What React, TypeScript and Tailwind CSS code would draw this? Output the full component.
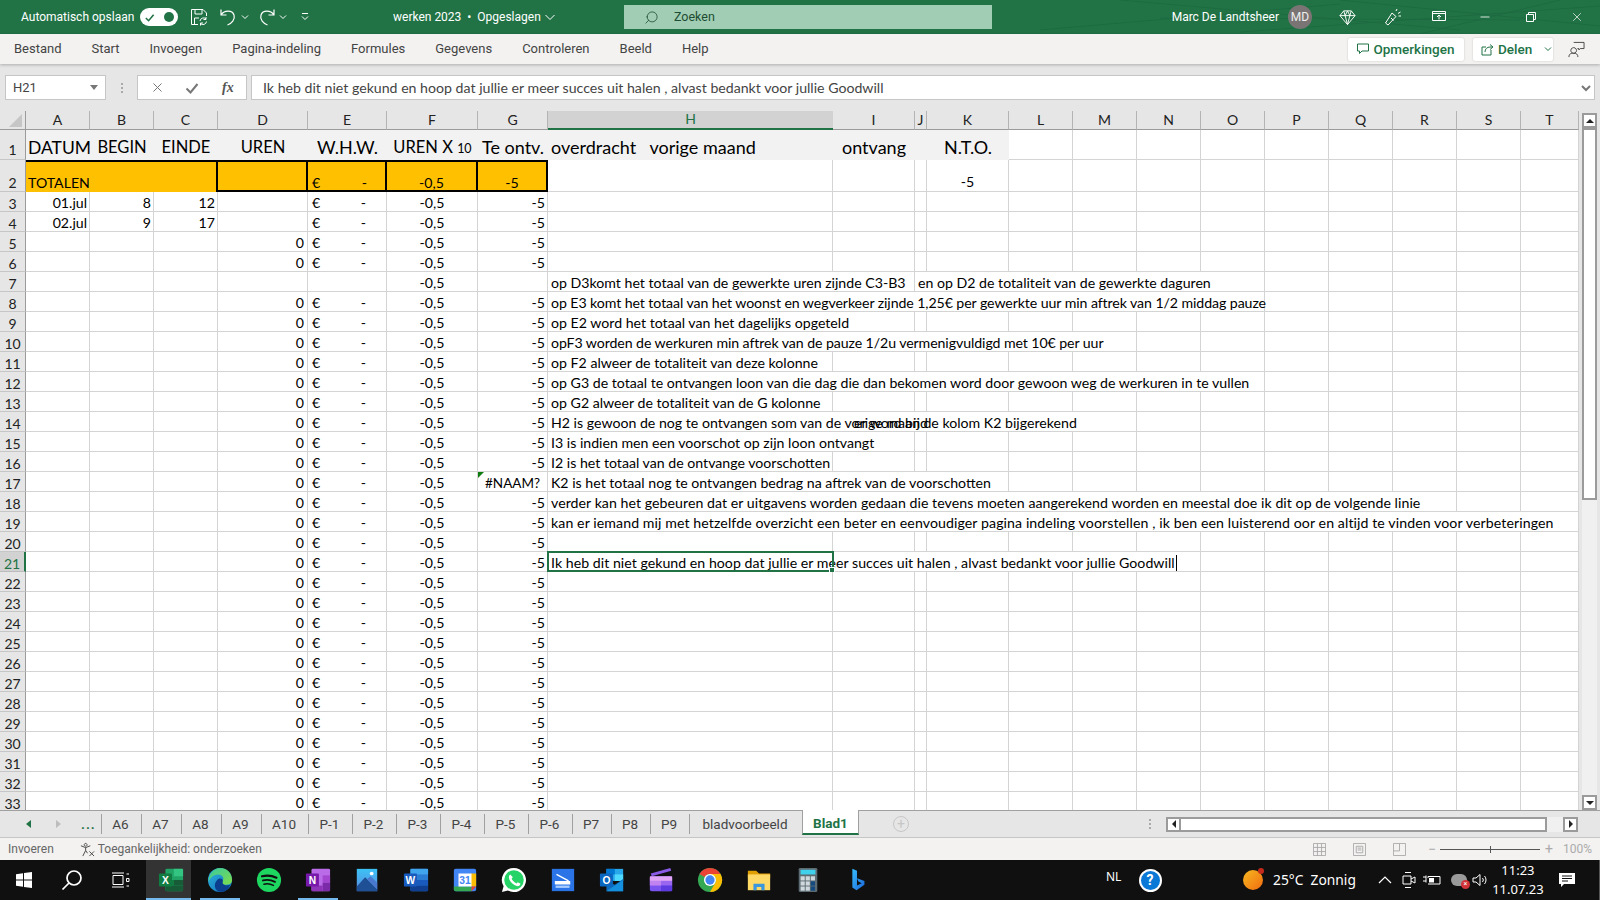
import { Minus, Search, X } from "lucide-react";

const GRID =
  "grid grid-cols-[26px_64px_64px_64px_90px_79px_91px_70px_285px_82px_12px_82px_64px_64px_64px_64px_64px_64px_64px_64px_58px]";
const LINE = "border-r border-b border-[#d4d4d4]";

const columns = ["A", "B", "C", "D", "E", "F", "G", "H", "I", "J", "K", "L", "M", "N", "O", "P", "Q", "R", "S", "T"];

const spanClass: Record<number, string> = {
  1: "col-span-1",
  2: "col-span-2",
  4: "col-span-4",
  6: "col-span-6",
  7: "col-span-7",
  8: "col-span-8",
  11: "col-span-11",
  13: "col-span-13",
};

const notes: Record<number, { text: string; span: number; track?: string }[]> = {
  7: [
    { text: "op D3komt het totaal van de gewerkte uren zijnde C3-B3", span: 2 },
    { text: "en op D2 de totaliteit van de gewerkte daguren", span: 6 },
  ],
  8: [{ text: "op E3 komt het totaal van het woonst en wegverkeer zijnde 1,25€ per gewerkte uur min aftrek van 1/2 middag pauze", span: 8, track: "tracking-[-0.08px]" }],
  9: [{ text: "op E2 word het totaal van het dagelijks opgeteld", span: 2 }],
  10: [{ text: "opF3 worden de werkuren min aftrek van de pauze 1/2u vermenigvuldigd met 10€ per uur", span: 6, track: "tracking-[-0.08px]" }],
  11: [{ text: "op F2 alweer de totaliteit van deze kolonne", span: 1 }],
  12: [{ text: "op G3 de totaal te ontvangen loon van die dag die dan bekomen word door gewoon weg de werkuren in te vullen", span: 8 }],
  13: [{ text: "op G2 alweer de totaliteit van de G kolonne", span: 1 }],
  14: [{ text: "H2 is gewoon de nog te ontvangen som van de vorige maand", span: 6 }],
  15: [{ text: "I3 is indien men een voorschot op zijn loon ontvangt", span: 2 }],
  16: [{ text: "I2 is het totaal van de ontvange voorschotten", span: 1 }],
  17: [{ text: "K2 is het totaal nog te ontvangen bedrag na aftrek van de voorschotten", span: 4 }],
  18: [{ text: "verder kan het gebeuren dat er uitgavens worden gedaan die tevens moeten aangerekend worden en meestal doe ik dit op de volgende linie", span: 11, track: "tracking-[0.05px]" }],
  19: [{ text: "kan er iemand mij met hetzelfde overzicht een beter en eenvoudiger pagina indeling voorstellen , ik ben een luisterend oor en altijd te vinden voor verbeteringen", span: 13, track: "tracking-[0.09px]" }],
  21: [{ text: "Ik heb dit niet gekund en hoop dat jullie er meer succes uit halen , alvast bedankt voor jullie Goodwill", span: 7, track: "tracking-[0.03px]" }],
};

const early: Record<number, string[]> = {
  3: ["01.jul", "8", "12"],
  4: ["02.jul", "9", "17"],
};

const rowNumbers = Array.from({ length: 31 }, (_, i) => i + 3);

function RowHead({ n, tall }: { n: number; tall?: string }) {
  const selected = n === 21;
  return (
    <div
      className={`flex items-end justify-center text-[14px] leading-[15px] ${tall ?? "h-5"} ${
        selected
          ? "bg-[#d2d2d2] text-[#217346] border-r-2 border-r-[#217346] border-b border-b-[#bcbcbc]"
          : "bg-[#e6e6e6] text-[#222] border-r border-r-[#9b9b9b] border-b border-b-[#c6c6c6]"
      }`}
    >
      {n}
    </div>
  );
}

function Cell({ className = "", children }: { className?: string; children?: React.ReactNode }) {
  return <div className={`h-5 pt-[2px] leading-[18px] whitespace-nowrap ${LINE} ${className}`}>{children}</div>;
}

function DataRow({ n }: { n: number }) {
  const first = early[n] ?? ["", "", ""];
  const list = notes[n] ?? [{ text: "", span: 1 }];
  const used = list.reduce((sum, note) => sum + note.span, 0);
  const blanks = Array.from({ length: 13 - used });
  const hasZero = n >= 5 && n !== 7;

  return (
    <div className={`${GRID} relative`}>
      <RowHead n={n} />
      <Cell className="pr-[2px] text-right">{first[0]}</Cell>
      <Cell className="pr-[2px] text-right">{first[1]}</Cell>
      <Cell className="pr-[2px] text-right">{first[2]}</Cell>
      <Cell className="pr-[3px] text-right">{hasZero ? "0" : ""}</Cell>
      <Cell className="flex justify-between pl-[4px] pr-[20px]">
        {n !== 7 && (
          <>
            <span>€</span>
            <span>-</span>
          </>
        )}
      </Cell>
      <Cell className="text-center">-0,5</Cell>
      {n === 17 ? (
        <Cell className="relative text-center text-[13.5px]">
          <span className="absolute left-0 top-0 h-0 w-0 border-t-[6px] border-r-[6px] border-t-[#107c10] border-r-transparent" />
          #NAAM?
        </Cell>
      ) : (
        <Cell className="pr-[2px] text-right">{n === 7 ? "" : "-5"}</Cell>
      )}
      {list.map((note, i) => (
        <Cell key={i} className={`relative pl-[3px] ${spanClass[note.span]} ${note.track ?? ""}`}>
          {note.text}
          {n === 21 && <span className="ml-px inline-block h-[16px] w-px bg-black align-[-3px]" />}
          {n === 14 && <span className="absolute left-[306px] top-[2px]">er word bij de kolom K2 bijgerekend</span>}
        </Cell>
      ))}
      {blanks.map((_, i) => (
        <Cell key={i} />
      ))}
      {n === 21 && (
        <div className="pointer-events-none absolute left-[547px] top-[-1px] h-[21px] w-[287px] border-2 border-[#217346]">
          <span className="absolute bottom-[-3px] right-[-3px] h-[6px] w-[6px] border border-white bg-[#217346]" />
        </div>
      )}
    </div>
  );
}

function Sheet() {
  return (
    <div className="h-[699px] w-[1579px] overflow-hidden bg-white font-['Lato',sans-serif] text-[14.15px] text-black">
      <div className={`${GRID} h-[19px] bg-[#e6e6e6] text-[14px] leading-[15px] text-[#222]`}>
        <div className="relative border-r border-b border-[#9b9b9b]">
          <span className="absolute bottom-[2px] right-[3px] h-0 w-0 border-b-[13px] border-l-[13px] border-b-[#c6c6c6] border-l-transparent" />
        </div>
        {columns.map((c) => (
          <div
            key={c}
            className={`flex items-center justify-center pb-[2px] ${
              c === "H"
                ? "bg-[#d2d2d2] text-[#217346] border-b-2 border-b-[#217346]"
                : "border-r border-r-[#b4b4b4] border-b border-b-[#9b9b9b]"
            }`}
          >
            {c}
          </div>
        ))}
      </div>
      <div className={`${GRID} h-[30px] grid-rows-[30px] text-[18px] leading-[35px]`}>
        <RowHead n={1} tall="h-[30px] pb-[2px]" />
        <div className="bg-[#f2f2f2] pl-[2px] text-[17.5px] whitespace-nowrap">DATUM</div>
        <div className="bg-[#f2f2f2] text-center text-[16.5px]">BEGIN</div>
        <div className="bg-[#f2f2f2] text-center text-[16.5px]">EINDE</div>
        <div className="bg-[#f2f2f2] text-center text-[16.5px]">UREN</div>
        <div className="bg-[#f2f2f2] text-center">W.H.W.</div>
        <div className="bg-[#f2f2f2] text-center text-[16.5px] whitespace-nowrap">
          UREN X <span className="text-[12.5px]">10</span>
        </div>
        <div className="bg-[#f2f2f2] text-center whitespace-nowrap">Te ontv.</div>
        <div className="bg-[#f2f2f2] pl-[3px] whitespace-pre">overdracht   vorige maand</div>
        <div className="bg-[#f2f2f2] pl-[9px]">ontvang</div>
        <div className="bg-[#f2f2f2]" />
        <div className="bg-[#f2f2f2] text-center">N.T.O.</div>
        {columns.slice(11).map((c) => (
          <div key={c} className={LINE} />
        ))}
      </div>
      <div className={`${GRID} h-[32px] grid-rows-[32px] leading-[14px]`}>
        <RowHead n={2} tall="h-[32px] pb-[1px]" />
        <div className="flex items-end border-t-2 border-black bg-[#ffc000] pb-[2px] pl-[2px]">TOTALEN</div>
        <div className="border-t-2 border-black bg-[#ffc000]" />
        <div className="border-t-2 border-r-2 border-black bg-[#ffc000]" />
        <div className="border-y-2 border-r-2 border-black bg-[#ffc000]" />
        <div className="flex items-end justify-between border-y-2 border-r-2 border-black bg-[#ffc000] pl-[4px] pr-[18px]">
          <span>€</span>
          <span>-</span>
        </div>
        <div className="flex items-end justify-center border-y-2 border-r-2 border-black bg-[#ffc000]">-0,5</div>
        <div className="flex items-end justify-center border-y-2 border-r-2 border-black bg-[#ffc000]">-5</div>
        <div className={LINE} />
        <div className={LINE} />
        <div className={LINE} />
        <div className={`flex items-end justify-center pb-[2px] ${LINE}`}>-5</div>
        {columns.slice(11).map((c) => (
          <div key={c} className={LINE} />
        ))}
      </div>
      {rowNumbers.map((n) => (
        <DataRow key={n} n={n} />
      ))}
    </div>
  );
}

function ScrollArrow({ path }: { path: string }) {
  return (
    <svg viewBox="0 0 10 10" className="h-[10px] w-[10px]" fill="#222">
      <path d={path} />
    </svg>
  );
}

function VScroll() {
  return (
    <div className="flex h-[699px] w-[21px] flex-col bg-[#e6e6e6] pl-[3px] pr-[3px] pt-[2px]">
      <div className="flex h-[15px] w-[15px] flex-none items-center justify-center border-2 border-[#9b9b9b] bg-white">
        <ScrollArrow path="M1 7 L5 3 L9 7 Z" />
      </div>
      <div className="h-[372px] w-[15px] flex-none border-2 border-[#9b9b9b] bg-white" />
      <div className="w-[15px] flex-1 bg-[#f0f0f0]" />
      <div className="flex h-[15px] w-[15px] flex-none items-center justify-center border-2 border-[#9b9b9b] bg-white">
        <ScrollArrow path="M1 3 L5 7 L9 3 Z" />
      </div>
    </div>
  );
}

function TitleBar() {
  return (
    <div className="relative flex h-[34px] items-center overflow-hidden bg-[#217346] text-[12px] text-white">
      <svg className="pointer-events-none absolute right-0 top-0 h-[34px] w-[560px] opacity-20" viewBox="0 0 560 34" fill="none" stroke="#0d4f2c">
        <path d="M0 30 L300 4 M80 0 L420 30 M200 32 L560 6 M300 0 L560 26 M380 34 L520 0 M120 18 L480 20" />
      </svg>
      <div className="flex w-[624px] flex-none items-center">
        <span className="ml-[21px] w-[119px] flex-none whitespace-nowrap">Automatisch opslaan</span>
        <div className="flex h-[18px] w-[38px] flex-none items-center justify-between rounded-full bg-white px-[4px]">
          <svg viewBox="0 0 12 12" className="h-[11px] w-[11px]" fill="none" stroke="#217346" strokeWidth="1.7">
            <path d="M2 6.5 L5 9.5 L10.5 3" />
          </svg>
          <span className="h-[10px] w-[10px] rounded-full bg-[#217346]" />
        </div>
        <svg viewBox="0 0 18 18" className="ml-[12px] h-[18px] w-[18px] flex-none" fill="none" stroke="white" strokeWidth="1">
          <path d="M1.5 1.5 H13 L16.5 5 V8 M8 16.5 H1.5 V1.5 M5 1.5 V6 H12 V1.5 M4.5 16 V10 H9" />
          <path d="M10 13 A3.5 3.5 0 0 1 16 11 M16.5 13.5 A3.5 3.5 0 0 1 10.5 15.5 M16 9 V11.5 H13.5 M10.5 17.5 V15 H13" />
        </svg>
        <svg viewBox="0 0 18 18" className="ml-[11px] h-[18px] w-[18px] flex-none" fill="none" stroke="white" strokeWidth="1.2">
          <path d="M2 1.5 V7 H7.5 M2.5 6.5 C5 2.5 13 1.5 15 7 C16.5 11.5 12.5 15.5 8.5 17" />
        </svg>
        <svg viewBox="0 0 8 8" className="ml-[4px] h-[8px] w-[8px] flex-none" fill="none" stroke="white">
          <path d="M1 2.5 L4 5.5 L7 2.5" />
        </svg>
        <svg viewBox="0 0 18 18" className="ml-[9px] h-[18px] w-[18px] flex-none" fill="none" stroke="white" strokeWidth="1.2">
          <path d="M16 1.5 V7 H10.5 M15.5 6.5 C13 2.5 5 1.5 3 7 C1.5 11.5 5.5 15.5 9.5 17" />
        </svg>
        <svg viewBox="0 0 8 8" className="ml-[3px] h-[8px] w-[8px] flex-none" fill="none" stroke="white">
          <path d="M1 2.5 L4 5.5 L7 2.5" />
        </svg>
        <svg viewBox="0 0 10 10" className="ml-[13px] h-[10px] w-[10px] flex-none" fill="none" stroke="white">
          <path d="M2 1.5 H8 M2 4.5 L5 7.5 L8 4.5" />
        </svg>
        <span className="ml-[83px] flex-none whitespace-nowrap">werken 2023&nbsp; •&nbsp; Opgeslagen</span>
        <svg viewBox="0 0 12 12" className="ml-[3px] h-[12px] w-[12px] flex-none" fill="none" stroke="white">
          <path d="M1.5 4 L6 8.5 L10.5 4" />
        </svg>
      </div>
      <div className="flex h-[24px] w-[368px] flex-none items-center bg-[#a0cdb4] text-[12.5px] text-[#1e4d33]">
        <Search className="ml-[20px] h-[15px] w-[15px] -scale-x-100" strokeWidth={1.3} />
        <span className="ml-[15px]">Zoeken</span>
      </div>
      <div className="relative flex flex-1 items-center justify-end">
        <span className="whitespace-nowrap">Marc De Landtsheer</span>
        <div className="ml-[9px] mr-[12px] flex h-[24px] w-[24px] items-center justify-center rounded-full bg-[#7a7574] text-[12px] text-[#eee]">
          MD
        </div>
        <div className="flex h-[34px] w-[46px] items-center justify-center">
          <svg viewBox="0 0 18 18" className="h-[17px] w-[17px]" fill="none" stroke="white">
            <path d="M5 2 H13 L17 7 L9 16.5 L1 7 Z M1 7 H17 M5 2 L6.5 7 L9 16.5 L11.5 7 L13 2 M6.5 7 L9 2 L11.5 7" />
          </svg>
        </div>
        <div className="flex h-[34px] w-[46px] items-center justify-center">
          <svg viewBox="0 0 18 18" className="h-[18px] w-[18px]" fill="none" stroke="white">
            <path d="M1.5 15 L8 5 L12 8.5 L4 17 Z M7 10 L9.5 12.5 M12 3 L13 1 M14 5.5 L16.5 4 M14.5 8 L17 8" />
          </svg>
        </div>
        <div className="flex h-[34px] w-[46px] items-center justify-center">
          <svg viewBox="0 0 14 12" className="h-[12px] w-[14px]" fill="none" stroke="white">
            <path d="M0.5 0.5 H13.5 V9.5 H0.5 Z M0.5 2.5 H13.5 M7 8.5 V4 M5 6 L7 4 L9 6" />
          </svg>
        </div>
        <div className="flex h-[34px] w-[46px] items-center justify-center">
          <Minus className="h-[14px] w-[14px]" strokeWidth={1.4} />
        </div>
        <div className="flex h-[34px] w-[46px] items-center justify-center">
          <svg viewBox="0 0 10 10" className="h-[10px] w-[10px]" fill="none" stroke="white">
            <path d="M0.5 2.5 H7.5 V9.5 H0.5 Z M2.5 2.5 V0.5 H9.5 V7.5 H7.5" />
          </svg>
        </div>
        <div className="flex h-[34px] w-[46px] items-center justify-center">
          <X className="h-[14px] w-[14px]" strokeWidth={1.2} />
        </div>
      </div>
    </div>
  );
}

const menu = ["Bestand", "Start", "Invoegen", "Pagina-indeling", "Formules", "Gegevens", "Controleren", "Beeld", "Help"];

function MenuBar() {
  return (
    <div className="relative z-10 flex h-[30px] items-center bg-[#f3f2f1] text-[13px] text-[#444] shadow-[0_1px_3px_rgba(0,0,0,0.25)]">
      <div className="flex gap-[30px] pl-[14px]">
        {menu.map((m) => (
          <span key={m}>{m}</span>
        ))}
      </div>
      <div className="ml-auto flex items-center text-[13.5px]">
        <div className="flex h-[23px] w-[116px] items-center justify-center gap-[4px] rounded-[2px] bg-white font-medium text-[#217346] shadow-[0_0_2px_rgba(0,0,0,0.2)]">
          <svg viewBox="0 0 12 12" className="h-[12px] w-[12px]" fill="none" stroke="#217346">
            <path d="M0.5 1 H11.5 V8 H5 L2.5 10.5 V8 H0.5 Z" />
          </svg>
          Opmerkingen
        </div>
        <div className="ml-[9px] flex h-[23px] w-[80px] items-center rounded-[2px] bg-white pl-[8px] font-medium text-[#217346] shadow-[0_0_2px_rgba(0,0,0,0.2)]">
          <svg viewBox="0 0 13 13" className="h-[13px] w-[13px]" fill="none" stroke="#217346">
            <path d="M10 7 V12 H1 V4 H5 M4 9 C4 6 6 4 9 4 H11 M9 1.5 L12 4 L9 6.5" />
          </svg>
          <span className="ml-[4px]">Delen</span>
          <svg viewBox="0 0 8 8" className="ml-[12px] h-[8px] w-[8px]" fill="none" stroke="#217346">
            <path d="M1 2.5 L4 5.5 L7 2.5" />
          </svg>
        </div>
        <div className="flex w-[47px] justify-center">
          <svg viewBox="0 0 18 18" className="h-[17px] w-[17px]" fill="none" stroke="#444">
            <path d="M6 1.5 H17 V8 H13 L11.5 9.5 V8 H10 M6 7 A3 3 0 1 0 6.01 7 M1 17 C1 13.5 3 13 6 13 C9 13 10.5 14 10.5 17" />
          </svg>
        </div>
      </div>
    </div>
  );
}

function FormulaBar() {
  return (
    <div className="flex h-[47px] items-start bg-[#e6e6e6] pt-[11px] text-[13px] text-[#444]">
      <div className="ml-[5px] flex h-[25px] w-[101px] flex-none items-center justify-between border border-[#c6c6c6] bg-white pl-[7px] pr-[7px]">
        H21
        <svg viewBox="0 0 8 5" className="h-[5px] w-[8px]" fill="#777">
          <path d="M0 0 H8 L4 5 Z" />
        </svg>
      </div>
      <div className="flex h-[25px] w-[31px] flex-none items-center justify-center">
        <span className="flex flex-col gap-[2px]">
          <span className="h-[2px] w-[2px] bg-[#aaa]" />
          <span className="h-[2px] w-[2px] bg-[#aaa]" />
          <span className="h-[2px] w-[2px] bg-[#aaa]" />
        </span>
      </div>
      <div className="flex h-[25px] w-[110px] flex-none items-center border border-[#c6c6c6] bg-white">
        <span className="flex w-[37px] justify-center pl-[2px]">
          <X className="h-[15px] w-[15px] text-[#777]" strokeWidth={1.6} />
        </span>
        <svg viewBox="0 0 14 14" className="ml-[10px] h-[14px] w-[14px]" fill="none" stroke="#777" strokeWidth="2">
          <path d="M1.5 7.5 L5.5 11.5 L12.5 3" />
        </svg>
        <span className="ml-[23px] font-['Liberation_Serif',serif] text-[14px] font-bold italic text-[#555]">fx</span>
      </div>
      <div className="ml-[4px] flex h-[25px] w-[1344px] flex-none items-center justify-between border border-[#c6c6c6] bg-white pl-[11px] pr-[3px]">
        <span className="pt-px font-['Lato',sans-serif] text-[14.15px]">
          Ik heb dit niet gekund en hoop dat jullie er meer succes uit halen , alvast bedankt voor jullie Goodwill
        </span>
        <svg viewBox="0 0 10 8" className="h-[8px] w-[10px]" fill="none" stroke="#777" strokeWidth="2">
          <path d="M1 2 L5 6 L9 2" />
        </svg>
      </div>
    </div>
  );
}

const tabs = [
  { label: "A6", w: "w-[40px]" },
  { label: "A7", w: "w-[40px]" },
  { label: "A8", w: "w-[40px]" },
  { label: "A9", w: "w-[40px]" },
  { label: "A10", w: "w-[47px]" },
  { label: "P-1", w: "w-[44px]" },
  { label: "P-2", w: "w-[44px]" },
  { label: "P-3", w: "w-[44px]" },
  { label: "P-4", w: "w-[44px]" },
  { label: "P-5", w: "w-[44px]" },
  { label: "P-6", w: "w-[44px]" },
  { label: "P7", w: "w-[39px]" },
  { label: "P8", w: "w-[39px]" },
  { label: "P9", w: "w-[39px]" },
  { label: "bladvoorbeeld", w: "w-[113px]" },
];

function SheetTabs() {
  return (
    <div className="flex h-[28px] border-y border-t-[#a0a0a0] border-b-[#c6c6c6] bg-[#e6e6e6] text-[13.5px] text-[#444]">
      <div className="flex w-[101px] flex-none items-center">
        <svg viewBox="0 0 6 8" className="ml-[26px] h-[8px] w-[6px]" fill="#217346">
          <path d="M5 0 V8 L0 4 Z" />
        </svg>
        <svg viewBox="0 0 6 8" className="ml-[23px] h-[8px] w-[6px]" fill="#bdbdbd">
          <path d="M1 0 V8 L6 4 Z" />
        </svg>
        <span className="ml-[20px] font-bold tracking-[1px] text-[#217346]">...</span>
      </div>
      {tabs.map((t) => (
        <div key={t.label} className={`flex flex-none items-center justify-center ${t.w}`}>
          <span className="flex h-[20px] w-full items-center justify-center border-l border-[#a0a0a0] pr-[2px]">{t.label}</span>
        </div>
      ))}
      <div className="-mt-px flex h-[25px] w-[57px] flex-none items-center justify-center border-x border-x-[#a0a0a0] border-b-2 border-b-[#217346] bg-white pt-[3px] font-bold text-[#217346]">
        Blad1
      </div>
      <div className="ml-[34px] flex h-[16px] w-[16px] flex-none items-center justify-center self-center rounded-full border border-[#c6c6c6] text-[14px] leading-none text-[#c6c6c6]">
        +
      </div>
      <span className="ml-[240px] flex flex-none flex-col gap-[2px] self-center">
        <span className="h-[2px] w-[2px] bg-[#aaa]" />
        <span className="h-[2px] w-[2px] bg-[#aaa]" />
        <span className="h-[2px] w-[2px] bg-[#aaa]" />
      </span>
      <div className="ml-[15px] flex h-[15px] w-[412px] flex-none self-center">
        <div className="flex w-[15px] items-center justify-center border-2 border-[#9b9b9b] bg-white">
          <ScrollArrow path="M7 1 L3 5 L7 9 Z" />
        </div>
        <div className="w-[366px] border-y-2 border-r-2 border-[#9b9b9b] bg-white" />
        <div className="flex-1 bg-[#f0f0f0]" />
        <div className="flex w-[15px] items-center justify-center border-2 border-[#9b9b9b] bg-white">
          <ScrollArrow path="M3 1 L7 5 L3 9 Z" />
        </div>
      </div>
    </div>
  );
}

function StatusBar() {
  return (
    <div className="flex h-[22px] items-center bg-[#f3f2f1] text-[12px] text-[#666]">
      <span className="ml-[8px]">Invoeren</span>
      <svg viewBox="0 0 16 16" className="ml-[26px] h-[15px] w-[15px]" fill="none" stroke="#444">
        <path d="M6 1.5 A1.5 1.5 0 1 0 6.01 1.5 M1 4 L6 6 L11 4 M6 6 V9 L3 15 M6 9 L8 12 M10 10 L15 15 M15 10 L10 15" />
      </svg>
      <span className="ml-[3px]">Toegankelijkheid: onderzoeken</span>
      <div className="ml-auto flex items-center">
        <svg viewBox="0 0 14 14" className="h-[13px] w-[13px]" fill="none" stroke="#aaa">
          <path d="M0.5 0.5 H13.5 V13.5 H0.5 Z M0.5 4.8 H13.5 M0.5 9.2 H13.5 M4.8 0.5 V13.5 M9.2 0.5 V13.5" />
        </svg>
        <svg viewBox="0 0 14 14" className="ml-[27px] h-[13px] w-[13px]" fill="none" stroke="#aaa">
          <path d="M0.5 0.5 H13.5 V13.5 H0.5 Z M3.5 3.5 H10.5 V10.5 H3.5 Z M5 5.5 H9 M5 7.5 H9" />
        </svg>
        <svg viewBox="0 0 14 14" className="ml-[27px] h-[13px] w-[13px]" fill="none" stroke="#aaa">
          <path d="M0.5 0.5 H13.5 V13.5 H0.5 Z M7 0.5 V8.5 H0.5" />
        </svg>
        <span className="ml-[22px] text-[14px] leading-none text-[#aaa]">−</span>
        <div className="relative ml-[4px] h-px w-[100px] bg-[#555]">
          <span className="absolute left-[50px] top-[-3px] h-[7px] w-px bg-[#555]" />
        </div>
        <span className="ml-[5px] text-[14px] leading-none text-[#aaa]">+</span>
        <span className="ml-[10px] mr-[8px] text-[12px] text-[#aaa]">100%</span>
      </div>
    </div>
  );
}

function ExcelIcon() {
  return (
    <svg viewBox="0 0 28 28" className="h-[26px] w-[26px]">
      <rect x="8" y="2" width="19" height="24" rx="1.5" fill="#21a366" />
      <rect x="17" y="2" width="10" height="8" fill="#33c481" />
      <rect x="8" y="14" width="9" height="6" fill="#107c41" />
      <rect x="17" y="14" width="10" height="6" fill="#185c37" />
      <rect x="8" y="20" width="19" height="6" fill="#185c37" />
      <rect x="1" y="7" width="14" height="14" rx="1" fill="#107c41" />
      <text x="8" y="18" textAnchor="middle" fontSize="11" fontWeight="700" fill="white" fontFamily="Liberation Sans">X</text>
    </svg>
  );
}

function EdgeIcon() {
  return (
    <svg viewBox="0 0 28 28" className="h-[26px] w-[26px]">
      <defs>
        <linearGradient id="edgeA" x1="0" y1="0" x2="1" y2="1">
          <stop offset="0" stopColor="#2fb3d8" />
          <stop offset="1" stopColor="#0c6fc0" />
        </linearGradient>
        <linearGradient id="edgeB" x1="0" y1="0" x2="1" y2="1">
          <stop offset="0" stopColor="#38c9a0" />
          <stop offset="1" stopColor="#7fdc4b" />
        </linearGradient>
      </defs>
      <circle cx="14" cy="14" r="13" fill="url(#edgeA)" />
      <path d="M14 1 C21 1 27 6 27 14 C27 18 24 19 21 19 C17 19 15 18 16 15 C19 14 18 8 12 8 C7 8 3 12 1.5 16 C2 8 7 1 14 1 Z" fill="url(#edgeB)" />
      <path d="M11 14 C14 11 18 13 17 16 C16 19 20 21 25 19 C23 25 17 28 12 26 C8 24 7 18 11 14 Z" fill="#0b3e8c" />
    </svg>
  );
}

function SpotifyIcon() {
  return (
    <svg viewBox="0 0 28 28" className="h-[26px] w-[26px]" fill="none" stroke="#101010" strokeLinecap="round">
      <circle cx="14" cy="14" r="13" fill="#1ed760" stroke="none" />
      <path d="M6.5 10 C12 8.5 17 9 22 11.5" strokeWidth="2.4" />
      <path d="M7.5 14.5 C12 13.3 16.5 14 20.5 16" strokeWidth="2" />
      <path d="M8.5 18.5 C12 17.7 15.5 18 18.8 19.8" strokeWidth="1.6" />
    </svg>
  );
}

function OneNoteIcon() {
  return (
    <svg viewBox="0 0 28 28" className="h-[26px] w-[26px]">
      <rect x="7" y="2" width="20" height="24" rx="1.5" fill="#ba6be8" />
      <rect x="19" y="9" width="8" height="8" fill="#a347d0" />
      <rect x="19" y="17" width="8" height="9" fill="#7b2aa8" />
      <rect x="7" y="20" width="12" height="6" fill="#8e34b8" />
      <rect x="1" y="7" width="14" height="14" rx="1" fill="#7719aa" />
      <text x="8" y="18" textAnchor="middle" fontSize="11" fontWeight="700" fill="white" fontFamily="Liberation Sans">N</text>
    </svg>
  );
}

function PhotosIcon() {
  return (
    <svg viewBox="0 0 28 28" className="h-[26px] w-[26px]">
      <defs>
        <linearGradient id="photoA" x1="0" y1="0" x2="0" y2="1">
          <stop offset="0" stopColor="#3cc2f5" />
          <stop offset="1" stopColor="#5a8be0" />
        </linearGradient>
      </defs>
      <rect x="3" y="2" width="22" height="24" fill="url(#photoA)" />
      <path d="M3 21 L12 11 L25 24 V26 H3 Z" fill="#1f4f94" />
      <path d="M14 13 L18 10 L25 17 V24 Z" fill="#4a78cf" />
      <circle cx="19" cy="7" r="2" fill="white" />
    </svg>
  );
}

function WordIcon() {
  return (
    <svg viewBox="0 0 28 28" className="h-[26px] w-[26px]">
      <rect x="8" y="2" width="19" height="24" rx="1.5" fill="#2b7cd3" />
      <rect x="8" y="2" width="19" height="6" fill="#41a5ee" />
      <rect x="8" y="14" width="19" height="6" fill="#185abd" />
      <rect x="8" y="20" width="19" height="6" fill="#103f91" />
      <rect x="1" y="7" width="14" height="14" rx="1" fill="#185abd" />
      <text x="8" y="18" textAnchor="middle" fontSize="11" fontWeight="700" fill="white" fontFamily="Liberation Sans">W</text>
    </svg>
  );
}

function CalendarIcon() {
  return (
    <svg viewBox="0 0 28 28" className="h-[26px] w-[26px]">
      <rect x="2" y="2" width="24" height="24" rx="2" fill="#4285f4" />
      <rect x="20" y="7" width="6" height="14" fill="#fbbc04" />
      <path d="M2 21 H21 V26 H4 C3 26 2 25 2 24 Z" fill="#34a853" />
      <path d="M21 21 H26 L21 26 Z" fill="#ea4335" />
      <rect x="7" y="7" width="14" height="14" fill="white" />
      <text x="14" y="18.5" textAnchor="middle" fontSize="11" fontWeight="700" fill="#4285f4" fontFamily="Liberation Sans">31</text>
    </svg>
  );
}

function WhatsappIcon() {
  return (
    <svg viewBox="0 0 28 28" className="h-[26px] w-[26px]">
      <path d="M14 1 A13 13 0 1 1 7.5 25.3 L1 27 L2.8 20.7 A13 13 0 0 1 14 1 Z" fill="white" />
      <circle cx="14" cy="14" r="10.5" fill="#25d366" />
      <path d="M10 8 C8.5 9 8 11 9 13.5 C10.5 17 13.5 19.5 17 20.5 C19 21 20.5 20 21 18 L18 16.3 L16.7 17.7 C14.5 17 12 14.5 11.5 12.5 L12.8 11 Z" fill="white" />
    </svg>
  );
}

function ScannerIcon() {
  return (
    <svg viewBox="0 0 28 28" className="h-[26px] w-[26px]">
      <rect x="2" y="2" width="24" height="24" fill="#2a74e8" />
      <path d="M7 8 L20 15 M6 16 H21 V18 H6 Z" stroke="white" strokeWidth="1.6" fill="white" />
      <rect x="6" y="20" width="15" height="2.5" fill="#a9ccff" />
    </svg>
  );
}

function OutlookIcon() {
  return (
    <svg viewBox="0 0 28 28" className="h-[26px] w-[26px]">
      <rect x="8" y="2" width="18" height="13" fill="#28a8ea" />
      <rect x="8" y="2" width="9" height="6" fill="#0078d4" />
      <rect x="17" y="8" width="9" height="7" fill="#50d9ff" />
      <path d="M8 15 L17 19 L26 13 V26 H8 Z" fill="#0f6cbd" />
      <path d="M8 26 L26 14 V26 Z" fill="#1490df" />
      <rect x="1" y="7" width="14" height="14" rx="1" fill="#0a66bf" />
      <text x="8" y="18" textAnchor="middle" fontSize="11" fontWeight="700" fill="white" fontFamily="Liberation Sans">O</text>
    </svg>
  );
}

function ClipchampIcon() {
  return (
    <svg viewBox="0 0 28 28" className="h-[26px] w-[26px]">
      <path d="M3 7 L24 1 L25 4 L4 10 Z" fill="#8b5be8" />
      <rect x="2" y="10" width="24" height="16" rx="2" fill="#7b53ee" />
      <rect x="2" y="10" width="24" height="5" fill="#e0a5f5" />
      <rect x="2" y="15" width="12" height="5" fill="#c083f0" />
      <rect x="14" y="15" width="12" height="5" fill="#9a66f0" />
      <rect x="14" y="20" width="12" height="6" fill="#5d3be0" />
    </svg>
  );
}

function ChromeIcon() {
  return (
    <svg viewBox="0 0 28 28" className="h-[26px] w-[26px]">
      <circle cx="14" cy="14" r="13" fill="#34a853" />
      <path d="M14 1 A13 13 0 0 1 25.3 7.5 L14 7.5 A6.5 6.5 0 0 0 8.4 10.8 L2.7 7.5 A13 13 0 0 1 14 1 Z" fill="#ea4335" />
      <path d="M25.3 7.5 A13 13 0 0 1 14 27 L19.6 17.2 A6.5 6.5 0 0 0 19.6 10.8 L14 7.5 Z" fill="#fbbc04" />
      <circle cx="14" cy="14" r="6.5" fill="white" />
      <circle cx="14" cy="14" r="5" fill="#4285f4" />
    </svg>
  );
}

function FolderIcon() {
  return (
    <svg viewBox="0 0 28 28" className="h-[26px] w-[26px]">
      <path d="M2 4 H11 L14 7 H26 V12 H2 Z" fill="#e0a000" />
      <rect x="2" y="8" width="24" height="17" fill="#ffd966" />
      <path d="M8 25 V18 H20 V25 H16.5 V21.5 H11.5 V25 Z" fill="#3a96dd" />
    </svg>
  );
}

function CalculatorIcon() {
  const keys = ["x-6", "x-11", "x-16"];
  return (
    <svg viewBox="0 0 28 28" className="h-[26px] w-[26px]">
      <rect x="4" y="1" width="20" height="26" rx="1.5" fill="#5d6b73" />
      <rect x="6" y="3" width="16" height="5" fill="#3fd0ee" />
      {keys.map((k, i) => (
        <g key={k} fill="#cfd8dc">
          <rect x={6 + i * 5.5} y="10" width="4.5" height="4.5" />
          <rect x={6 + i * 5.5} y="15.5" width="4.5" height="4.5" fill={i === 2 ? "#134a80" : "#cfd8dc"} />
          <rect x={6 + i * 5.5} y="21" width="4.5" height="4.5" fill={i === 2 ? "#134a80" : "#cfd8dc"} />
        </g>
      ))}
    </svg>
  );
}

function BingIcon() {
  return (
    <svg viewBox="0 0 28 28" className="h-[26px] w-[26px]">
      <defs>
        <linearGradient id="bingA" x1="0" y1="0" x2="1" y2="1">
          <stop offset="0" stopColor="#37bdff" />
          <stop offset="1" stopColor="#1b66d8" />
        </linearGradient>
      </defs>
      <path d="M9 2 L14 4 V20 L19 17.5 L15.5 15.5 L14 12 L22 15 V19 L13.5 25 L9 22 Z" fill="url(#bingA)" />
    </svg>
  );
}

const apps = [
  { icon: <ExcelIcon />, on: true, active: true },
  { icon: <EdgeIcon />, on: true },
  { icon: <SpotifyIcon /> },
  { icon: <OneNoteIcon />, on: true },
  { icon: <PhotosIcon /> },
  { icon: <WordIcon /> },
  { icon: <CalendarIcon /> },
  { icon: <WhatsappIcon /> },
  { icon: <ScannerIcon /> },
  { icon: <OutlookIcon /> },
  { icon: <ClipchampIcon /> },
  { icon: <ChromeIcon /> },
  { icon: <FolderIcon /> },
  { icon: <CalculatorIcon /> },
  { icon: <BingIcon /> },
];

function Taskbar() {
  return (
    <div className="flex h-[40px] items-center border-r border-r-[#555] bg-[#101010] text-white">
      <div className="flex w-[48px] flex-none justify-center">
        <svg viewBox="0 0 16 16" className="h-[16px] w-[16px]" fill="white">
          <path d="M0 2.3 L7 1.3 V7.5 H0 Z M8 1.1 L16 0 V7.5 H8 Z M0 8.5 H7 V14.7 L0 13.7 Z M8 8.5 H16 V16 L8 14.9 Z" />
        </svg>
      </div>
      <div className="flex w-[48px] flex-none justify-center">
        <svg viewBox="0 0 22 22" className="h-[22px] w-[22px]" fill="none" stroke="white" strokeWidth="1.7">
          <circle cx="13" cy="9" r="7" />
          <path d="M8 14 L1.5 20.5" />
        </svg>
      </div>
      <div className="flex w-[50px] flex-none justify-center">
        <svg viewBox="0 0 18 16" className="h-[16px] w-[18px]" fill="none" stroke="white">
          <path d="M1 3.5 H11 V12.5 H1 Z M0 1 H12 M0 15 H12 M14.5 2 H17 M14.5 6.5 H17 V9.5 H14.5 Z M14.5 14 H17" />
        </svg>
      </div>
      {apps.map((app, i) => (
        <div key={i} className="relative flex h-full w-[49px] flex-none items-center justify-center">
          {app.active && <span className="absolute inset-y-0 left-0 w-[45px] bg-[#333]" />}
          <span className="relative flex">{app.icon}</span>
          {app.on && (
            <span
              className={`absolute bottom-0 h-[2px] bg-[#76b9ed] ${app.active ? "left-0 w-[45px]" : "left-[5px] w-[40px]"}`}
            />
          )}
        </div>
      ))}
      <span className="ml-[225px] w-[19px] flex-none self-start pt-[8px] font-['Noto_Sans',sans-serif] text-[12px]">NL</span>
      <div className="flex w-[50px] flex-none justify-center">
        <div className="flex h-[23px] w-[23px] items-center justify-center rounded-full border-2 border-white bg-[#0a78d6] text-[14px] font-bold">?</div>
      </div>
      <div className="relative ml-[68px] h-[20px] w-[20px] flex-none rounded-full bg-gradient-to-br from-[#f5b820] to-[#ef6a10]">
        <span className="absolute right-[-1px] top-[-2px] h-[6px] w-[6px] rounded-full bg-[#c42b1c]" />
      </div>
      <span className="ml-[10px] flex-none font-['Noto_Sans',sans-serif] text-[13.8px]">25°C&nbsp; Zonnig</span>
      <svg viewBox="0 0 14 8" className="ml-[22px] h-[8px] w-[14px] flex-none" fill="none" stroke="white" strokeWidth="1.2">
        <path d="M1 7 L7 1 L13 7" />
      </svg>
      <svg viewBox="0 0 14 18" className="ml-[10px] h-[18px] w-[14px] flex-none" fill="none" stroke="white">
        <path d="M3 1.5 H9 M3 16.5 H9 M1 5 H9 V13 H1 Z M9 8 L13 6 V12 L9 10" />
      </svg>
      <svg viewBox="0 0 18 12" className="ml-[7px] h-[12px] w-[18px] flex-none" fill="none" stroke="white">
        <path d="M5 2.5 H17 V10 H5 M0 3 H3 M0 7 H3 M3 1.5 V8.5 M5 2.5 V4" />
        <rect x="6" y="4" width="5" height="4.5" fill="white" stroke="none" />
      </svg>
      <div className="relative ml-[10px] h-[12px] w-[16px] flex-none rounded-full bg-[#9a9a9a]">
        <span className="absolute bottom-[-3px] right-[-3px] flex h-[9px] w-[9px] items-center justify-center rounded-full bg-[#d13438] text-[7px] leading-none">×</span>
      </div>
      <svg viewBox="0 0 16 14" className="ml-[5px] h-[14px] w-[16px] flex-none" fill="none" stroke="white">
        <path d="M1 5 H4 L8 1.5 V12.5 L4 9 H1 Z M10.5 5 A3 3 0 0 1 10.5 9 M12.5 3 A6 6 0 0 1 12.5 11" />
      </svg>
      <div className="ml-[2px] flex w-[56px] flex-none flex-col items-center font-['Noto_Sans',sans-serif] text-[13px] leading-[19px]">
        <span>11:23</span>
        <span>11.07.23</span>
      </div>
      <svg viewBox="0 0 18 16" className="ml-[12px] h-[16px] w-[18px] flex-none" fill="white">
        <path d="M1 1 H17 V12 H6 L3 15 V12 H1 Z" />
        <path d="M4 4 H14 M4 6.5 H14 M4 9 H10" stroke="#101010" />
      </svg>
    </div>
  );
}

export default function App() {
  return (
    <div className="flex h-[900px] w-[1600px] flex-col overflow-hidden bg-[#e6e6e6] font-['Roboto',sans-serif]">
      <TitleBar />
      <MenuBar />
      <FormulaBar />
      <div className="flex">
        <Sheet />
        <VScroll />
      </div>
      <SheetTabs />
      <StatusBar />
      <Taskbar />
    </div>
  );
}
